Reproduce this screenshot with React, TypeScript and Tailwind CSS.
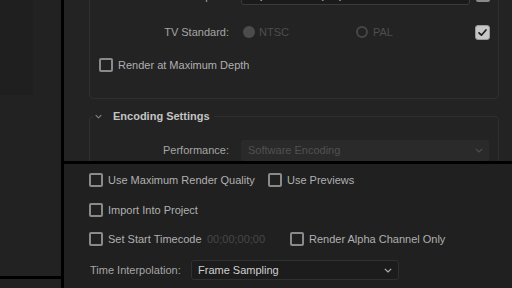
import React from 'react';

const font = { fontFamily: '"Liberation Sans", Arial, sans-serif' };

const Check: React.FC<{ checked?: boolean }> = ({ checked }) =>
  checked ? (
    <span className="flex h-[15px] w-[15px] items-center justify-center rounded-[3px] border border-[#9a9a9a] bg-[#c6c6c6]">
      <svg width="11" height="11" viewBox="0 0 11 11">
        <polyline points="2,5.8 4.4,8.2 9,3" fill="none" stroke="#1c1c1c" strokeWidth="1.7" strokeLinecap="round" strokeLinejoin="round" />
      </svg>
    </span>
  ) : (
    <span className="block h-[14px] w-[14px] rounded-[2px] border-2 border-[#8a8a8a]" />
  );

const Chevron: React.FC<{ color: string; w?: number }> = ({ color, w = 8 }) => (
  <svg width={w} height="5" viewBox="0 0 8 5">
    <polyline points="0.8,0.8 4,4 7.2,0.8" fill="none" stroke={color} strokeWidth="1.2" />
  </svg>
);

const CheckRow: React.FC<{ label: string; checked?: boolean }> = ({ label, checked }) => (
  <div className="flex items-center gap-[5px]">
    <Check checked={checked} />
    <span className="text-[11px] text-[#b0b0b0]">{label}</span>
  </div>
);

export default function App() {
  return (
    <div className="flex h-[288px] w-[512px] overflow-hidden bg-[#222222] select-none" style={font}>
      {/* left column */}
      <div className="flex w-[61px] flex-col">
        <div className="h-[276px] bg-[#222222]">
          <div className="h-[95px] w-[33px] bg-[#1f1f1f]" />
        </div>
        <div className="h-[3px] bg-black" />
        <div className="flex-1 bg-[#222222]" />
      </div>
      <div className="w-[3px] bg-black" />

      {/* right column */}
      <div className="flex flex-1 flex-col">
        {/* top panel, scrolled */}
        <div className="h-[161px] overflow-hidden bg-[#232323]">
          <div className="-mt-[40px] pl-[25px] pr-[13px]">
            {/* video group */}
            <div className="rounded-[4px] border border-[#2f2f2f] pt-[23px] pb-[23px]">
              <div className="flex h-[21px] items-center">
                <span className="w-[139px] pt-[3px] text-right text-[11px] text-[#a6a6a6]">Aspect:</span>
                <div className="ml-[12px] flex h-[21px] w-[229px] items-end rounded-[3px] border border-[#3a3a3a] bg-[#1b1b1b] px-[7px] pb-[1px]">
                  <span className="text-[11px] text-[#d2d2d2]">Square Pixels (1.0)</span>
                </div>
                <div className="ml-auto pr-[8px]">
                  <Check />
                </div>
              </div>
              <div className="mt-[17px] flex h-[20px] items-center">
                <span className="w-[139px] text-right text-[11px] text-[#a6a6a6]">TV Standard:</span>
                <div className="ml-[14px] flex w-[113px] items-center gap-[4px]">
                  <span className="block h-[12px] w-[12px] rounded-full bg-[#4c4c4c]" />
                  <span className="text-[11px] text-[#4e4e4e]">NTSC</span>
                </div>
                <div className="flex items-center gap-[5px]">
                  <span className="block h-[12px] w-[12px] rounded-full border-2 border-[#474747]" />
                  <span className="text-[11px] text-[#4e4e4e]">PAL</span>
                </div>
                <div className="ml-auto pr-[8px]">
                  <Check checked />
                </div>
              </div>
              <div className="mt-[13px] flex h-[20px] items-center pl-[9px]">
                <CheckRow label="Render at Maximum Depth" />
              </div>
            </div>

            {/* encoding group */}
            <fieldset className="mt-[9px] h-[80px] rounded-[4px] border border-[#2f2f2f] pr-[9px]">
              <legend className="ml-[3px] px-[2px] pr-[4px]">
                <div className="flex h-[16px] items-center">
                  <Chevron color="#8a8a8a" w={7} />
                  <span className="ml-[11px] text-[11px] font-bold text-[#c4c4c4]">Encoding Settings</span>
                </div>
              </legend>
              <div className="mt-[16px] flex h-[21px] items-center">
                <span className="w-[139px] text-right text-[11px] text-[#a6a6a6]">Performance:</span>
                <div className="ml-[12px] flex h-[21px] flex-1 items-center justify-between rounded-[3px] bg-[#2a2a2a] pl-[7px] pr-[6px]">
                  <span className="text-[11px] text-[#515151]">Software Encoding</span>
                  <Chevron color="#4e4e4e" />
                </div>
              </div>
            </fieldset>
          </div>
        </div>
        <div className="h-[3px] bg-black" />

        {/* bottom panel */}
        <div className="flex-1 bg-[#202020] pl-[25px] pt-[6px]">
          <div className="flex h-[20px] items-center">
            <div className="w-[179px]">
              <CheckRow label="Use Maximum Render Quality" />
            </div>
            <CheckRow label="Use Previews" />
          </div>
          <div className="mt-[10px] flex h-[20px] items-center">
            <CheckRow label="Import Into Project" />
          </div>
          <div className="mt-[9px] flex h-[20px] items-center">
            <div className="w-[118px]">
              <CheckRow label="Set Start Timecode" />
            </div>
            <span className="w-[83px] text-[11px] text-[#474747]">00;00;00;00</span>
            <CheckRow label="Render Alpha Channel Only" />
          </div>
          <div className="mt-[11px] flex h-[20px] items-center">
            <span className="w-[102px] pl-[1px] text-[11px] text-[#a6a6a6]">Time Interpolation:</span>
            <div className="flex h-[20px] w-[208px] items-center justify-between rounded-[3px] border border-[#303030] bg-[#1c1c1c] pl-[6px] pr-[6px]">
              <span className="text-[11px] text-[#d0d0d0]">Frame Sampling</span>
              <Chevron color="#b0b0b0" />
            </div>
          </div>
        </div>
      </div>
    </div>
  );
}
